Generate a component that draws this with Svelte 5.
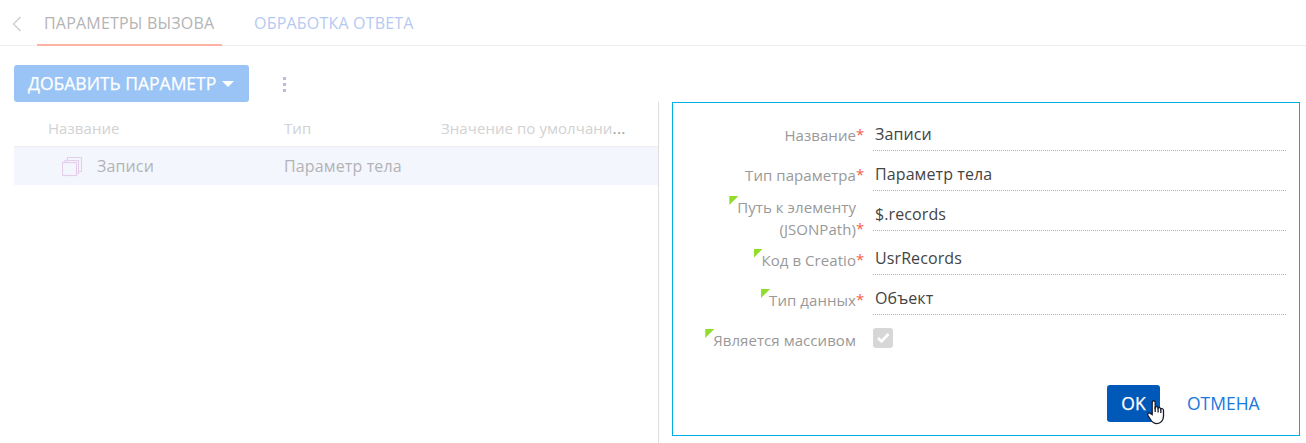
<script>
  const fields = [
    { lines: ['Название'], value: 'Записи', required: true },
    { lines: ['Тип параметра'], value: 'Параметр тела', required: true },
    { lines: ['Путь к элементу', '(JSONPath)'], value: '$.records', required: true, hint: true },
    { lines: ['Код в Creatio'], value: 'UsrRecords', required: true, hint: true },
    { lines: ['Тип данных'], value: 'Объект', required: true, hint: true },
    { lines: ['Является массивом'], checked: true, hint: true }
  ];
</script>

<div class="page">
  <nav class="tabs">
    <svg class="back" width="10" height="16" viewBox="0 0 10 16"><path d="M8.500 1 1.500 8l7 7" /></svg>
    <span class="tab active">ПАРАМЕТРЫ ВЫЗОВА</span>
    <span class="tab link">ОБРАБОТКА ОТВЕТА</span>
  </nav>

  <div class="toolbar">
    <button class="add"><span>ДОБАВИТЬ ПАРАМЕТР</span><i class="caret"></i></button>
    <div class="dots"><i></i><i></i><i></i></div>
  </div>

  <main>
    <section class="list">
      <div class="row head">
        <span>Название</span><span>Тип</span><span>Значение по умолчани<b>...</b></span>
      </div>
      <div class="row item">
        <span class="name">
          <svg width="21" height="20" viewBox="0 0 21 20">
            <path d="M5.500 3V.5h14v14H17M3 5.500v-2h13.500v13H15" />
            <rect x=".5" y="5.500" width="14" height="13" />
          </svg>
          Записи
        </span>
        <span>Параметр тела</span>
      </div>
    </section>

    <section class="panel">
      {#each fields as f}
        <div class="field" class:tall={f.lines.length > 1}>
          <div class="label">
            <span class="text">
              {#if f.hint}<i class="flag"></i>{/if}
              {#each f.lines as line}<span class="line">{line}</span>{/each}
            </span>
            <span class="star">{f.required ? '*' : ''}</span>
          </div>
          {#if f.checked}
            <div class="check">
              <svg width="20" height="20" viewBox="0 0 20 20"><path d="m5 10 3.500 3.500 7-7.500" /></svg>
            </div>
          {:else}
            <div class="value">{f.value}</div>
          {/if}
        </div>
      {/each}
      <div class="actions">
        <button class="ok">OK
          <svg class="cursor" width="18" height="25" viewBox="0 0 18 25">
            <path d="M5.200 14.500V2.600C5.200.1 8.200.1 8.200 2.600v4.700c.6-1 2.600-.8 2.900.6.8-.8 2.400-.4 2.700.9 1-.6 2.700 0 2.700 1.700v5.500c0 4.300-2.600 7.600-6.700 7.600-3.200 0-4.700-1.500-6.300-4.100L1 15.700c-1.100-1.900 1-3.600 2.400-2.300z" />
            <path class="fingers" d="M8.200 7v5M11.100 8v4.500M13.800 9v4" />
          </svg>
        </button>
        <button class="cancel">ОТМЕНА</button>
      </div>
    </section>
  </main>
</div>

<style>
  :global(body) { margin: 0; background: #fff; }
  .page { width: 1306px; height: 443px; overflow: hidden; font-family: "Open Sans", sans-serif; font-size: 16px; color: #444; display: flex; flex-direction: column; }
  button { font: inherit; border: 0; padding: 0; background: none; }
  .tabs { box-sizing: border-box; height: 46px; border-bottom: 1px solid #ededed; display: flex; }
  .back { margin: 16px 15px 0 12px; fill: none; stroke: #d3d3d3; stroke-width: 1.700; }
  .tab { box-sizing: border-box; height: 46px; line-height: 46px; letter-spacing: .2px; white-space: nowrap; }
  .active { width: 185px; padding-left: 7px; color: #b4b4b4; border-bottom: 2px solid #ffb1a3; }
  .link { margin-left: 32px; color: #b5c9f3; }
  .toolbar { height: 56px; padding: 19px 0 0 14px; box-sizing: border-box; display: flex; }
  .add { width: 235px; height: 37px; border-radius: 3px; background: #9ac4f6; color: #fff; display: flex; align-items: center; padding-left: 14px; box-sizing: border-box; font-size: 17.500px; white-space: nowrap; }
  .add span { padding-bottom: 2px; -webkit-text-stroke: .25px; }
  .caret { margin-left: 6px; border: 6px solid transparent; border-top-color: #fff; border-bottom: 0; }
  .dots { margin: 12px 0 0 34px; display: flex; flex-direction: column; gap: 3px; }
  .dots i { width: 3px; height: 3px; background: #b4bfe0; }
  main { display: flex; height: 341px; }
  .list { box-sizing: border-box; width: 659px; padding-left: 14px; border-right: 1px solid #dedede; }
  .row { display: grid; grid-template-columns: 236px 157px 1fr; padding-left: 34px; white-space: nowrap; }
  .head { height: 44px; line-height: 52px; font-size: 15px; letter-spacing: .06px; color: #d2d2d2; }
  .head b { color: #aaa; font-weight: 600; letter-spacing: .3px; }
  .item { height: 38px; line-height: 39px; background: #f4f6fe; border-top: 1px solid #eee; color: #b3b3b5; letter-spacing: .14px; }
  .name { display: flex; padding-left: 14px; gap: 14px; }
  .name svg { margin-top: 10px; fill: none; stroke: #e5cfeb; stroke-width: 1.200; }
  .panel { box-sizing: border-box; width: 628px; height: 334px; margin-left: 13px; border: 1px solid #00aee6; padding: 8px 13px 0 0; display: flex; flex-direction: column; }
  .field { height: 40px; display: flex; flex: none; }
  .field.tall { height: 44px; }
  .label { width: 191px; margin-right: 9px; display: flex; justify-content: flex-end; padding-top: 14px; font-size: 15px; line-height: 22px; letter-spacing: .06px; color: #999; }
  .field:nth-child(-n+2) .label { padding-top: 13px; }
  .field.tall .label { padding-top: 5px; }
  .text { position: relative; text-align: right; white-space: nowrap; }
  .line { display: block; }
  .star { width: 8px; margin-top: -1px; color: #f55f4e; text-align: center; }
  .tall .star { padding-top: 22px; }
  .flag { position: absolute; left: -8px; top: 0; width: 9px; height: 9px; background: #92dc2c; clip-path: polygon(0 0, 100% 0, 0 100%); }
  .value { flex: 1; height: 40px; line-height: 46px; padding-left: 2px; letter-spacing: .1px; background: repeating-linear-gradient(90deg, #b0b0b0 0 1px, transparent 1px 2px) bottom / 100% 1px no-repeat; }
  .tall .value { flex: 1; }
  .check { width: 20px; height: 20px; margin-top: 13px; border-radius: 3px; background: #d7d7d7; }
  .check svg { display: block; fill: none; stroke: #fff; stroke-width: 2.600; }
  .actions { display: flex; margin: 30px 0 0 434px; font-size: 17.500px; }
  .ok { position: relative; width: 53px; height: 37px; padding-bottom: 2px; border-radius: 3px; background: #0058b8; color: #fff; -webkit-text-stroke: .25px; }
  .cursor { position: absolute; left: 40px; top: 15px; fill: #fff; stroke: #171b28; stroke-width: 1.300; }
  .fingers { fill: none; }
  .cancel { margin-left: 27px; padding-bottom: 2px; color: #1878df; }
</style>
